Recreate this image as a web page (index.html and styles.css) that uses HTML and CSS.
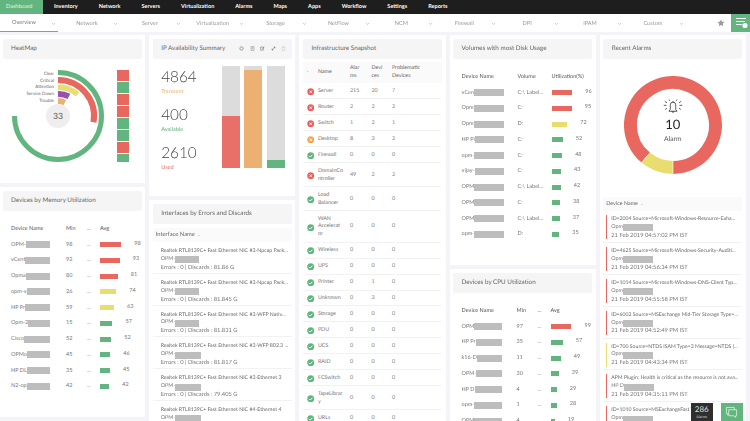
FILE: index.html
```html
<!DOCTYPE html>
<html lang="en">
<head>
<meta charset="utf-8">
<title>Dashboard</title>
<link rel="stylesheet" href="styles.css">
</head>
<body>
<svg class="defs" width="0" height="0" aria-hidden="true">
  <symbol id="st-ok" viewBox="0 0 8 8"><circle cx="4" cy="4" r="3.7" fill="#5fb57e"/><path d="M2.2 4.1 3.5 5.4 5.9 2.8" fill="none" stroke="#fff" stroke-width="1"/></symbol>
  <symbol id="st-bad" viewBox="0 0 8 8"><circle cx="4" cy="4" r="3.7" fill="#e8605f"/><path d="M2.6 2.6 5.4 5.4M5.4 2.6 2.6 5.4" fill="none" stroke="#fff" stroke-width="1"/></symbol>
  <symbol id="st-warn" viewBox="0 0 8 8"><circle cx="4" cy="4" r="3.7" fill="#f0a657"/><path d="M2.6 2.6 5.4 5.4M5.4 2.6 2.6 5.4" fill="none" stroke="#fff" stroke-width="1"/></symbol>
  <symbol id="chev" viewBox="0 0 6 4"><path d="M1 1 3 3 5 1" fill="none" stroke="#aaa" stroke-width=".7"/></symbol>
</svg>
<div class="page">
  <nav class="topnav">
    <a class="top-active">Dashboard</a><a>Inventory</a><a>Network</a><a>Servers</a><a>Virtualization</a><a>Alarms</a><a>Maps</a><a>Apps</a><a>Workflow</a><a>Settings</a><a>Reports</a>
  </nav>
  <nav class="subnav">
    <a class="sub sub-active"><span>Overview</span><svg class="chev"><use href="#chev"/></svg></a>
    <a class="sub"><span>Network</span><svg class="chev"><use href="#chev"/></svg></a>
    <a class="sub"><span>Server</span><svg class="chev"><use href="#chev"/></svg></a>
    <a class="sub"><span>Virtualization</span><svg class="chev"><use href="#chev"/></svg></a>
    <a class="sub"><span>Storage</span><svg class="chev"><use href="#chev"/></svg></a>
    <a class="sub"><span>NetFlow</span><svg class="chev"><use href="#chev"/></svg></a>
    <a class="sub"><span>NCM</span><svg class="chev"><use href="#chev"/></svg></a>
    <a class="sub"><span>Firewall</span><svg class="chev"><use href="#chev"/></svg></a>
    <a class="sub"><span>DPI</span><svg class="chev"><use href="#chev"/></svg></a>
    <a class="sub"><span>IPAM</span><svg class="chev"><use href="#chev"/></svg></a>
    <a class="sub"><span>Custom</span><svg class="chev"><use href="#chev"/></svg></a>
    <svg class="star" viewBox="0 0 10 10"><path d="M5 .6 6.3 3.5 9.5 3.9 7.1 6 7.8 9.2 5 7.6 2.2 9.2 2.9 6 .5 3.9 3.7 3.5Z" fill="#9a9a9a"/></svg>
    <a class="side-toggle"><svg viewBox="0 0 20 18" width="20" height="18"><path d="M5 4.5H15M5 7.5H14M5 10.5H11" stroke="#fff" stroke-width="1"/><circle cx="14" cy="11.5" r="2.6" fill="#fff"/></svg></a>
  </nav>

  <main class="board">
    <div class="col">
      <section class="card card-heat">
        <h2 class="card-title">HeatMap</h2>
        <div class="heat">
          <svg class="heat-chart" viewBox="0 65 112 105" width="112" height="105">
            <g fill="none">
              <path d="M54 73.5A43.5 43.5 0 1 1 10.5 117" stroke="#62b57e" stroke-width="5"/>
              <path d="M54 81A36 36 0 0 1 89.5 123.3" stroke="#e8675f" stroke-width="6"/>
              <path d="M54 88.2A28.8 28.8 0 0 1 73.5 95.3" stroke="#e8dd6e" stroke-width="5.6"/>
              <path d="M54 95A22 22 0 0 1 64.9 97.4" stroke="#9b4fb0" stroke-width="6"/>
              <path d="M54 102A15 15 0 0 1 60.8 103.6" stroke="#ecb072" stroke-width="6"/>
            </g>
            <circle cx="54" cy="117" r="12" fill="#eeeeee"/>
            <text class="heat-num" x="54" y="120">33</text>
            <text class="heat-label" x="50" y="75.7">Clear</text>
            <text class="heat-label" x="50" y="82.5">Critical</text>
            <text class="heat-label" x="50" y="89.2">Attention</text>
            <text class="heat-label" x="50" y="95.9">Service Down</text>
            <text class="heat-label" x="50" y="102.7">Trouble</text>
          </svg>
          <div class="squares">
            <i class="sq bg-red"></i><i class="sq bg-green"></i><i class="sq bg-red"></i><i class="sq bg-red"></i><i class="sq bg-green"></i><i class="sq bg-green"></i><i class="sq bg-red"></i><i class="sq sq-short bg-green"></i>
          </div>
        </div>
      </section>

      <section class="card card-mem">
        <h2 class="card-title">Devices by Memory Utilization</h2>
        <div class="dev-table dev-mem">
          <div class="dev-row dev-head"><span class="dev-name">Device Name</span><span>Min</span><span>...</span><span>Avg</span></div>
          <div class="dev-row"><span class="dev-name">OPM-<i class="rd"></i></span><span>98</span><span>...</span><span class="meter"><b class="bar bg-red" style="width:21px"></b><em>98</em></span></div>
          <div class="dev-row"><span class="dev-name">vCent<i class="rd"></i></span><span>92</span><span>...</span><span class="meter"><b class="bar bg-red" style="width:19.5px"></b><em>93</em></span></div>
          <div class="dev-row"><span class="dev-name">Opma<i class="rd"></i></span><span>80</span><span>...</span><span class="meter"><b class="bar bg-red" style="width:17.5px"></b><em>81</em></span></div>
          <div class="dev-row"><span class="dev-name">opm-v<i class="rd"></i></span><span>26</span><span>...</span><span class="meter"><b class="bar bg-yellow" style="width:16px"></b><em>74</em></span></div>
          <div class="dev-row"><span class="dev-name">HP Pr<i class="rd"></i></span><span>59</span><span>...</span><span class="meter"><b class="bar bg-yellow" style="width:13.7px"></b><em>63</em></span></div>
          <div class="dev-row"><span class="dev-name">Opm-2<i class="rd"></i></span><span>15</span><span>...</span><span class="meter"><b class="bar bg-green" style="width:12.3px"></b><em>57</em></span></div>
          <div class="dev-row"><span class="dev-name">Cisco<i class="rd"></i></span><span>52</span><span>...</span><span class="meter"><b class="bar bg-green" style="width:11px"></b><em>52</em></span></div>
          <div class="dev-row"><span class="dev-name">OPMo<i class="rd"></i></span><span>45</span><span>...</span><span class="meter"><b class="bar bg-green" style="width:10px"></b><em>46</em></span></div>
          <div class="dev-row"><span class="dev-name">HP DL<i class="rd"></i></span><span>35</span><span>...</span><span class="meter"><b class="bar bg-green" style="width:9.7px"></b><em>45</em></span></div>
          <div class="dev-row"><span class="dev-name">N2-op<i class="rd"></i></span><span>42</span><span>...</span><span class="meter"><b class="bar bg-green" style="width:9px"></b><em>42</em></span></div>
        </div>
      </section>
    </div>

    <div class="col">
      <section class="card card-ip">
        <h2 class="card-title card-title-tools">IP Availability Summary
          <span class="tools">
            <svg viewBox="0 0 6 6"><circle cx="3" cy="3" r="2" fill="none" stroke="#777" stroke-width=".8"/></svg>
            <svg viewBox="0 0 6 6"><path d="M1.2.6H4.8V5.4H1.2ZM2 2H4M2 3.2H4" fill="none" stroke="#888" stroke-width=".6"/></svg>
            <svg viewBox="0 0 6 6"><path d="M.8 1.2H4V5H.8ZM2.4 3.4 5.4.8" fill="none" stroke="#777" stroke-width=".7"/></svg>
            <svg viewBox="0 0 6 6"><path d="M1.2 4.8 4.8 1.2M3.2 1.2H4.8V2.8M1.2 3.2V4.8H2.8" fill="none" stroke="#666" stroke-width=".7"/></svg>
            <svg viewBox="0 0 6 6"><path d="M1.4 1.6H4.6V5.4H1.4ZM1 1H5" fill="none" stroke="#ccc" stroke-width=".7"/></svg>
          </span>
        </h2>
        <div class="ip-body">
          <div class="ip-stats">
            <div class="stat"><strong>4864</strong><span class="tx-orange">Transient</span></div>
            <div class="stat"><strong>400</strong><span class="tx-green">Available</span></div>
            <div class="stat"><strong>2610</strong><span class="tx-red">Used</span></div>
          </div>
          <div class="stack"><i class="fill bg-salmon" style="height:51%"></i></div>
          <div class="stack"><i class="fill bg-orange" style="height:96%"></i></div>
          <div class="stack"><i class="fill bg-green" style="height:8%"></i></div>
        </div>
      </section>

      <section class="card">
        <h2 class="card-title">Interfaces by Errors and Discards</h2>
        <div class="list-head list-head-if">Interface Name <span class="sort">⌄</span></div>
        <div class="if-row"><p>Realtek RTL8139C+ Fast Ethernet NIC #3-Npcap Pack...</p><p class="nm">OPM-<i class="rd rd-w1"></i></p><p>Errors : 0 | Discards : 81.86 G</p></div>
        <div class="if-row"><p>Realtek RTL8139C+ Fast Ethernet NIC #3-Npcap Pack...</p><p class="nm">OPM-<i class="rd rd-w1"></i></p><p>Errors : 0 | Discards : 81.845 G</p></div>
        <div class="if-row"><p>Realtek RTL8139C+ Fast Ethernet NIC #3-WFP Nativ...</p><p class="nm">OPM-<i class="rd rd-w1"></i></p><p>Errors : 0 | Discards : 81.831 G</p></div>
        <div class="if-row"><p>Realtek RTL8139C+ Fast Ethernet NIC #3-WFP 802.3 ...</p><p class="nm">OPM-<i class="rd rd-w2"></i></p><p>Errors : 0 | Discards : 81.817 G</p></div>
        <div class="if-row"><p>Realtek RTL8139C+ Fast Ethernet NIC #3-Ethernet 3</p><p class="nm">OPM-<i class="rd rd-w2"></i></p><p>Errors : 0 | Discards : 79.405 G</p></div>
        <div class="if-row"><p>Realtek RTL8139C+ Fast Ethernet NIC #4-Ethernet 4</p><p class="nm">OPM-<i class="rd rd-w2"></i></p></div>
      </section>
    </div>

    <div class="col">
      <section class="card">
        <h2 class="card-title">Infrastructure Snapshot</h2>
        <div class="infra">
          <div class="in-row in-head"><span class="sort">⌃</span><span>Name</span><span>Alar<wbr>ms</span><span>Devi<wbr>ces</span><span class="in-wide">Problematic Devices</span></div>
          <div class="in-row"><svg class="st"><use href="#st-bad"/></svg><span>Server</span><span>215</span><span>20</span><span>7</span></div>
          <div class="in-row"><svg class="st"><use href="#st-bad"/></svg><span>Router</span><span>2</span><span>2</span><span>2</span></div>
          <div class="in-row"><svg class="st"><use href="#st-bad"/></svg><span>Switch</span><span>1</span><span>2</span><span>1</span></div>
          <div class="in-row"><svg class="st"><use href="#st-warn"/></svg><span>Desktop</span><span>8</span><span>3</span><span>2</span></div>
          <div class="in-row"><svg class="st"><use href="#st-ok"/></svg><span>Firewall</span><span>0</span><span>0</span><span>0</span></div>
          <div class="in-row"><svg class="st"><use href="#st-bad"/></svg><span>DomainCo<wbr>ntroller</span><span>49</span><span>2</span><span>2</span></div>
          <div class="in-row"><svg class="st"><use href="#st-ok"/></svg><span>Load Balancer</span><span>0</span><span>0</span><span>0</span></div>
          <div class="in-row"><svg class="st"><use href="#st-ok"/></svg><span>WAN Accelerat<wbr>or</span><span>0</span><span>0</span><span>0</span></div>
          <div class="in-row"><svg class="st"><use href="#st-ok"/></svg><span>Wireless</span><span>0</span><span>0</span><span>0</span></div>
          <div class="in-row"><svg class="st"><use href="#st-ok"/></svg><span>UPS</span><span>0</span><span>0</span><span>0</span></div>
          <div class="in-row"><svg class="st"><use href="#st-ok"/></svg><span>Printer</span><span>0</span><span>1</span><span>0</span></div>
          <div class="in-row"><svg class="st"><use href="#st-ok"/></svg><span>Unknown</span><span>0</span><span>3</span><span>0</span></div>
          <div class="in-row"><svg class="st"><use href="#st-ok"/></svg><span>Storage</span><span>0</span><span>0</span><span>0</span></div>
          <div class="in-row"><svg class="st"><use href="#st-ok"/></svg><span>PDU</span><span>0</span><span>0</span><span>0</span></div>
          <div class="in-row"><svg class="st"><use href="#st-ok"/></svg><span>UCS</span><span>0</span><span>0</span><span>0</span></div>
          <div class="in-row"><svg class="st"><use href="#st-ok"/></svg><span>RAID</span><span>0</span><span>0</span><span>0</span></div>
          <div class="in-row"><svg class="st"><use href="#st-ok"/></svg><span>FCSwitch</span><span>0</span><span>0</span><span>0</span></div>
          <div class="in-row"><svg class="st"><use href="#st-ok"/></svg><span>TapeLibrar<wbr>y</span><span>0</span><span>0</span><span>0</span></div>
          <div class="in-row"><svg class="st"><use href="#st-ok"/></svg><span>URLs</span><span>0</span><span>0</span><span>0</span></div>
        </div>
      </section>
    </div>

    <div class="col">
      <section class="card card-vol">
        <h2 class="card-title">Volumes with most Disk Usage</h2>
        <div class="dev-table dev-vol">
          <div class="dev-row dev-head"><span class="dev-name">Device Name</span><span>Volume</span><span>Utilization(%)</span></div>
          <div class="dev-row"><span class="dev-name">vCen<i class="rd"></i></span><span>C:\ Label...</span><span class="meter"><b class="bar bg-red" style="width:20.5px"></b><em>96</em></span></div>
          <div class="dev-row"><span class="dev-name">Opm<i class="rd"></i></span><span>C:</span><span class="meter"><b class="bar bg-red" style="width:20px"></b><em>95</em></span></div>
          <div class="dev-row"><span class="dev-name">Opm<i class="rd"></i></span><span>D:</span><span class="meter"><b class="bar bg-yellow" style="width:15.5px"></b><em>72</em></span></div>
          <div class="dev-row"><span class="dev-name">HP Pi<i class="rd"></i></span><span>C:</span><span class="meter"><b class="bar bg-green" style="width:11px"></b><em>52</em></span></div>
          <div class="dev-row"><span class="dev-name">opm-<i class="rd"></i></span><span>C:</span><span class="meter"><b class="bar bg-green" style="width:10.3px"></b><em>48</em></span></div>
          <div class="dev-row"><span class="dev-name">vijay-<i class="rd"></i></span><span>C:</span><span class="meter"><b class="bar bg-green" style="width:9.2px"></b><em>43</em></span></div>
          <div class="dev-row"><span class="dev-name">OPM<i class="rd"></i></span><span>C:\ Label...</span><span class="meter"><b class="bar bg-green" style="width:9px"></b><em>42</em></span></div>
          <div class="dev-row"><span class="dev-name">OPM<i class="rd"></i></span><span>C:</span><span class="meter"><b class="bar bg-green" style="width:8.2px"></b><em>38</em></span></div>
          <div class="dev-row"><span class="dev-name">OPM<i class="rd"></i></span><span>C:\ Label...</span><span class="meter"><b class="bar bg-green" style="width:8px"></b><em>37</em></span></div>
          <div class="dev-row"><span class="dev-name">opm-<i class="rd"></i></span><span>D:</span><span class="meter"><b class="bar bg-green" style="width:7.5px"></b><em>35</em></span></div>
        </div>
      </section>

      <section class="card">
        <h2 class="card-title">Devices by CPU Utilization</h2>
        <div class="dev-table dev-cpu">
          <div class="dev-row dev-head"><span class="dev-name">Device Name</span><span>Min</span><span>...</span><span>Avg</span></div>
          <div class="dev-row"><span class="dev-name">OPM<i class="rd"></i></span><span>97</span><span>...</span><span class="meter"><b class="bar bg-red" style="width:20.7px"></b><em>99</em></span></div>
          <div class="dev-row"><span class="dev-name">HP Pr<i class="rd"></i></span><span>35</span><span>...</span><span class="meter"><b class="bar bg-green" style="width:12px"></b><em>57</em></span></div>
          <div class="dev-row"><span class="dev-name">k16-D<i class="rd"></i></span><span>11</span><span>...</span><span class="meter"><b class="bar bg-green" style="width:10px"></b><em>49</em></span></div>
          <div class="dev-row"><span class="dev-name">OPM-<i class="rd"></i></span><span>30</span><span>...</span><span class="meter"><b class="bar bg-green" style="width:8px"></b><em>39</em></span></div>
          <div class="dev-row"><span class="dev-name">HP D<i class="rd"></i></span><span>4</span><span>...</span><span class="meter"><b class="bar bg-green" style="width:6px"></b><em>29</em></span></div>
          <div class="dev-row"><span class="dev-name">opm-<i class="rd"></i></span><span>1</span><span>...</span><span class="meter"><b class="bar bg-green" style="width:6px"></b><em>28</em></span></div>
          <div class="dev-row"><span class="dev-name">OPM<i class="rd"></i></span><span>4</span><span>...</span><span class="meter"><b class="bar bg-green" style="width:4px"></b><em>19</em></span></div>
        </div>
      </section>
    </div>

    <div class="col">
      <section class="card">
        <h2 class="card-title">Recent Alarms</h2>
        <div class="donut">
          <svg viewBox="0 0 98 98" width="98" height="98">
            <path d="M49 91.5A42.5 42.5 0 1 0 21.7 81.6" fill="none" stroke="#e8675f" stroke-width="13"/>
            <path d="M21.7 81.6A42.5 42.5 0 0 0 49 91.5" fill="none" stroke="#e8dd6e" stroke-width="13"/>
            <path d="M49 85V98M23.5 79.5 15.5 89" stroke="#fff" stroke-width=".6"/>
          </svg>
          <div class="donut-center">
            <svg class="bell" viewBox="0 0 22 16" width="20" height="14.5">
              <path d="M6.5 13.5H15.5L14 11.5V6.5A3 3 0 0 0 8 6.5V11.5ZM9.8 13.5A1.2 1.2 0 0 0 12.2 13.5M11 3.5V2.2" fill="none" stroke="#222" stroke-width=".8"/>
              <path d="M.8 7H3.8M18.2 7H21.2M2 2.6 4.4 4.2M20 2.6 17.6 4.2M2.4 11.6 4.4 10.2M19.6 11.6 17.6 10.2M6.6 .6 7.4 2M15.4 .6 14.6 2" fill="none" stroke="#222" stroke-width=".8"/>
            </svg>
            <strong>10</strong>
            <span>Alarm</span>
          </div>
        </div>
        <div class="list-head list-head-al">Device Name <span class="sort">⌄</span></div>
        <div class="al-row"><div class="al-inner al-red"><p>ID=2004 Source=Microsoft-Windows-Resource-Exha...</p><p class="nm">Opm<i class="rd rd-w3"></i></p><p>21 Feb 2019 04:57:02 PM IST</p></div></div>
        <div class="al-row"><div class="al-inner al-red"><p>ID=4625 Source=Microsoft-Windows-Security-Auditi...</p><p class="nm">Opm<i class="rd rd-w3"></i></p><p>21 Feb 2019 04:56:34 PM IST</p></div></div>
        <div class="al-row"><div class="al-inner al-red"><p>ID=1014 Source=Microsoft-Windows-DNS-Client Typ...</p><p class="nm">Opm<i class="rd rd-w3"></i></p><p>21 Feb 2019 04:55:58 PM IST</p></div></div>
        <div class="al-row"><div class="al-inner al-red"><p>ID=6002 Source=MSExchange Mid-Tier Storage Type=...</p><p class="nm">Opm<i class="rd rd-w3"></i></p><p>21 Feb 2019 04:52:49 PM IST</p></div></div>
        <div class="al-row"><div class="al-inner al-yellow"><p>ID=700 Source=NTDS ISAM Type=3 Message=NTDS (...</p><p class="nm">Opm<i class="rd rd-w3"></i></p><p>21 Feb 2019 04:43:34 PM IST</p></div></div>
        <div class="al-row"><div class="al-inner al-red"><p>APM Plugin: Health is critical as the resource is not ava...</p><p class="nm">HP D<i class="rd rd-w3"></i></p><p>21 Feb 2019 04:35:11 PM IST</p></div></div>
        <div class="al-row"><div class="al-inner al-red"><p>ID=1010 Source=MSExchangeFast Type=</p><p class="nm">Opm<i class="rd rd-w3"></i></p></div></div>
      </section>
    </div>
  </main>

  <div class="float-alarm"><strong>286</strong><span>Alarms</span></div>
  <div class="float-chat">
    <svg viewBox="0 0 14 14" width="13" height="13"><path d="M1.5 1.5H10V8H4.5L2.5 9.8V8H1.5Z" fill="none" stroke="#d8f0df" stroke-width=".9"/><path d="M4 4H12.5V10.5H11.5V12.3L9.5 10.5H4Z" fill="#62b57e" stroke="#d8f0df" stroke-width=".9"/></svg>
  </div>
</div>
</body>
</html>
```

FILE: styles.css
```css
* { box-sizing: border-box; }
html, body { margin: 0; padding: 0; height: 421px; overflow: hidden; background: #f4f4f8; }
body { font-family: Lato, "Open Sans", sans-serif; color: #777; font-size: 5.4px; text-rendering: geometricPrecision; }
p, h2 { margin: 0; font-weight: 400; }
.defs { position: absolute; }
.page { position: relative; width: 750px; height: 421px; overflow: hidden; filter: blur(.3px); }

.topnav { display: flex; height: 13.5px; background: #1e1e1e; }
.topnav a { display: flex; align-items: center; padding: 0 10.5px; color: #fff; font-weight: 700; font-size: 5.55px; white-space: nowrap; }
.topnav .top-active { background: #62b57e; color: #e4f5ea; padding: 0 11px 0 6px; font-weight: 400; }

.subnav { display: flex; gap: 4.9px; height: 18px; margin-top: 0; background: #fff; border-top: 1px solid #fff; align-items: stretch; position: relative; }
.sub { position: relative; display: flex; align-items: center; justify-content: center; width: 58px; padding-right: 10px; color: #999; font-size: 5.6px; white-space: nowrap; }
.sub-active { color: #777; border-bottom: 1px solid #62b57e; }
.chev { position: absolute; right: 2.5px; top: 7.5px; width: 5px; height: 3.5px; }
.star { width: 8px; height: 8px; margin: 4.5px 0 0 25px; }
.side-toggle { width: 19px; margin-left: auto; margin-top: -1px; background: #62b57e; }

.board { display: grid; grid-template-columns: repeat(5, 146.2px); gap: 4px; margin: 3.5px 0 0 -1px; align-items: start; }
.col { display: flex; flex-direction: column; gap: 4px; }
.card { background: #fff; padding: 3.5px 3.5px 0; overflow: hidden; }
.card-title { display: flex; align-items: center; height: 20.8px; padding-left: 8.5px; background: #f5f5f5; border-radius: 2px; color: #666; font-size: 6.3px; white-space: nowrap; }
.card-title-tools { justify-content: space-between; padding-right: 5.5px; }

.card-heat { height: 148px; }
.heat { display: flex; margin-left: 1px; padding-top: 5.2px; }
.heat-chart { flex: none; }
.heat-label { font-size: 4.5px; fill: #666; text-anchor: end; }
.heat-num { font-size: 8.6px; fill: #555; text-anchor: middle; }
.squares { display: flex; flex-direction: column; gap: 1px; margin: 6px 0 0 1.5px; }
.sq { display: block; width: 12px; height: 11px; }
.sq-short { height: 8px; }
.bg-red { background: #e8675f; }
.bg-salmon { background: #e97068; }
.bg-green { background: #62b57e; }
.bg-yellow { background: #e8dd6e; }
.bg-orange { background: #ecb072; }
.tx-orange { color: #ecb072; }
.tx-green { color: #62b57e; }
.tx-red { color: #e8675f; }

.card-mem { height: 230px; }
.dev-table { padding: 9.5px 0 0 8.5px; font-size: 5.5px; }
.dev-row { display: grid; align-items: center; height: 15.75px; white-space: nowrap; }
.dev-head { color: #555; height: 16px; }
.dev-mem .dev-row, .dev-cpu .dev-row { grid-template-columns: 55px 21px 13px 1fr; }
.dev-vol .dev-row { grid-template-columns: 56px 34px 1fr; }
.dev-name { display: flex; align-items: center; padding-right: 15px; }
.dev-mem .dev-name { padding-right: 16px; }
.dev-vol .dev-row:nth-child(n+2) .dev-name { padding-right: 14px; }
.rd { display: inline-block; background: #bdbdbd; height: 7px; }
.dev-name .rd { flex: 1; min-width: 0; }
.meter { display: flex; align-items: center; }
.bar { display: block; height: 5px; }
.meter em { font-style: normal; margin: -2px 0 0 13.3px; }
.card-vol { height: 230px; }

.card-ip { height: 161px; }
.tools { display: flex; gap: 5.6px; }
.tools svg { width: 5px; height: 5px; }
.ip-body { display: flex; padding: 6.7px 0 0 8.5px; }
.ip-stats { width: 60.5px; padding-top: 4.5px; display: flex; flex-direction: column; gap: 11.8px; }
.stat { display: flex; flex-direction: column; height: 26px; }
.stat strong { font-weight: 300; font-size: 15.3px; line-height: 15px; color: #444; }
.stat span { font-size: 5.6px; line-height: 10px; margin-top: 1.5px; }
.stack { position: relative; width: 18px; height: 102px; background: #dcdcdc; margin-right: 4.5px; flex: none; }
.fill { position: absolute; left: 0; right: 0; bottom: 0; }

.list-head { height: 14px; background: #fafafa; display: flex; align-items: center; color: #666; gap: 2px; }
.list-head-if { margin-top: 3.7px; padding-left: 3px; font-size: 5.8px; }
.list-head-al { margin-top: 0; padding-left: 3px; }
.sort { color: #aaa; font-size: 4.5px; }
.if-row { padding: 6px 3px 0 8px; border-bottom: 1px solid #f2f2f2; height: 31.8px; font-size: 5.75px; }
.if-row p, .al-inner p { line-height: 7.9px; white-space: nowrap; }
.if-row p:first-child { color: #666; font-size: 5.2px; }
.al-inner p:first-child { color: #666; font-size: 5.15px; }
.nm { display: flex; align-items: center; font-size: 5.4px; }
.rd-w1 { width: 24px; }
.rd-w2 { width: 26px; }
.rd-w3 { width: 30px; }

.infra { margin-top: 3.2px; }
.in-row { display: grid; grid-template-columns: 15px 32px 21.5px 20.5px 1fr; padding: 4.6px 0 2.6px; align-items: center; border-bottom: 1px solid #f2f2f2; line-height: 7.8px; margin-right: 1px; }
.in-row > span:nth-of-type(1) { padding-right: 5.5px; }
.in-row > span:nth-of-type(2) { padding-right: 5px; }
.in-row > span:nth-of-type(3) { padding-right: 5px; }
.in-head { background: #fafafa; color: #666; padding: 3px 0; border-bottom: 0; height: 21px; margin-right: 0; }
.in-head .sort { text-align: center; }
.in-head > span:nth-of-type(3) { padding-right: 8px; }
.in-head > span:nth-of-type(4) { padding-right: 6px; }
.in-head .in-wide { max-width: 40px; }
.st { display: block; width: 7.5px; height: 7.5px; margin-left: 3.8px; }

.donut { position: relative; width: 98px; margin: 17.2px 0 0 20.5px; height: 120.5px; }
.donut-center { position: absolute; left: 0; top: 23px; width: 98px; display: flex; flex-direction: column; align-items: center; }
.donut-center strong { font-weight: 400; font-size: 13px; line-height: 14px; color: #222; margin-top: 3.5px; }
.donut-center span { font-size: 6.7px; line-height: 9px; color: #555; margin-top: 3.5px; }
.al-row { padding: 4px 3px 3px 3px; height: 31.9px; border-bottom: 1px solid #f2f2f2; font-size: 5.75px; }
.al-inner { height: 24px; padding: 1px 0 0 4px; border-left: 1.3px solid; }
.al-red { border-left-color: #e8675f; }
.al-yellow { border-left-color: #e8dd6e; }

.float-alarm { position: absolute; left: 691px; top: 403px; width: 21.5px; height: 18px; background: #2f2f2f; color: #ddd; display: flex; flex-direction: column; align-items: center; }
.float-alarm strong { font-weight: 400; font-size: 8px; line-height: 9px; margin-top: 2px; }
.float-alarm span { font-size: 3.6px; line-height: 4px; margin-top: .5px; }
.float-chat { position: absolute; left: 721px; top: 403px; width: 21.5px; height: 18px; background: #62b57e; display: flex; align-items: center; justify-content: center; }
```
